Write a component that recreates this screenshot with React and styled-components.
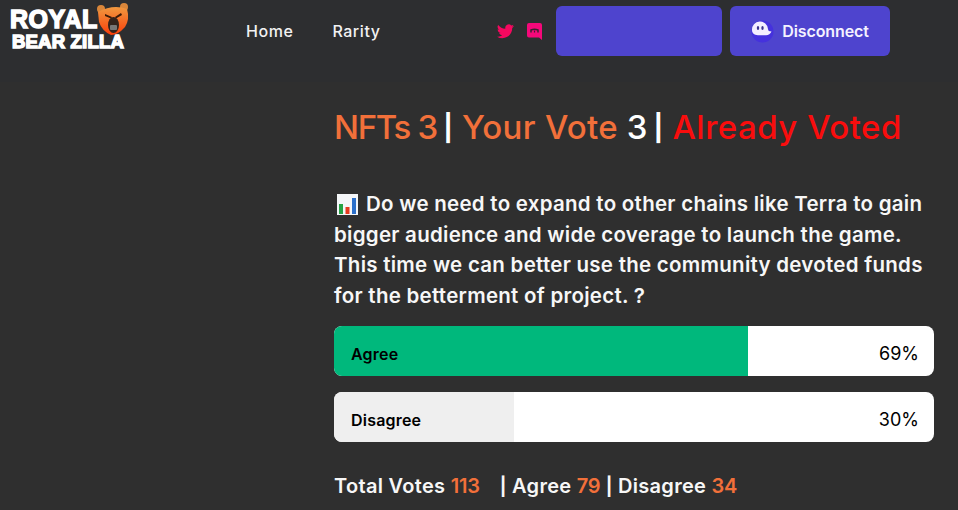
import React from "react";
import styled, { createGlobalStyle } from "styled-components";

const Global = createGlobalStyle`
  html, body { margin: 0; padding: 0; background: #2f2f2f; }
  body { font-family: Inter, "Noto Sans", sans-serif; color: #fff; overflow: hidden; }
`;
const Page = styled.div`width: 958px; height: 510px; overflow: hidden; background: #2f2f2f;`;
const Header = styled.header`
  height: 82px; background: #2d2e30; display: flex; align-items: flex-start; box-sizing: border-box;
  padding: 6px 0 0 10px;
`;
const Logo = styled.div`position: relative; width: 125px; height: 50px; flex: none; margin-top: -4px;`;
const LogoLine = styled.div`
  position: absolute; left: ${p => p.$x}px; top: ${p => p.$y}px; white-space: nowrap;
  font: 900 ${p => p.$size}px/${p => p.$lh}px "Liberation Sans", sans-serif; color: #fff;
  -webkit-text-stroke: 1.5px #fff; letter-spacing: ${p => p.$sp}px;
`;
const BearMark = styled.svg`position: absolute; left: 86px; top: 0; width: 35px; height: 36px;`;
const Nav = styled.nav`display: flex; gap: 39px; margin-left: 111px; height: 50px; align-items: center; width: 251px; flex: none;`;
const NavLink = styled.a`font-size: 16px; font-weight: 500; color: #f2f2f2; letter-spacing: .55px;`;
const Social = styled.div`display: flex; gap: 13px; align-items: center; height: 50px; width: 59px; flex: none;`;
const Btn = styled.div`
  height: 50px; width: ${p => p.$w}px; margin-right: ${p => p.$mr || 0}px; flex: none; background: #4e44ce; border-radius: 6px;
  display: flex; align-items: center; justify-content: center; gap: 8px; box-sizing: border-box;
  font-size: 16px; font-weight: 600; color: #f4f2ff; letter-spacing: -.1px;
`;
const Main = styled.main`margin-left: 334px; width: 600px;`;
const Title = styled.h1`
  margin: 24px 0 0; height: 42px; font-size: 33px; line-height: 42px; font-weight: 550; color: #fff; white-space: nowrap;
`;
const Run = styled.span`color: ${p => p.$c}; letter-spacing: ${p => p.$sp}px;`;
const Pipe = styled.span`font-size: 26px; font-weight: 700; position: relative; top: -2px; margin: ${p => p.$m};`;
const Question = styled.p`
  margin: 41px 0 0; font-size: 20.5px; line-height: 30.5px; font-weight: 580; color: #f7f7f7; white-space: nowrap; letter-spacing: .27px;
`;
const Chart = styled.svg`width: 21px; height: 21px; vertical-align: -4px; margin: 0 8px 0 3px;`;
const Bar = styled.div`
  position: relative; height: 50px; background: #fff; border-radius: 8px; overflow: hidden; margin-top: ${p => p.$mt}px;
  display: flex; align-items: center; justify-content: space-between; padding: 0 15px 0 17px; color: #000;
`;
const Fill = styled.div`position: absolute; left: 0; top: 0; bottom: 0; background: ${p => p.$c};`;
const BarLabel = styled.span`position: relative; font-size: 16px; font-weight: 600; margin-top: 6px; letter-spacing: .2px;`;
const Pct = styled.span`position: relative; font-size: 18px; font-weight: 400; margin-top: 5px;`;
const Totals = styled.div`margin-top: 30px; font-size: 20px; line-height: 28px; font-weight: 580; color: #f7f7f7; white-space: pre; letter-spacing: .3px;`;
const Gap = styled.span`display: inline-block; width: ${p => p.$w}px;`;
const SmallPipe = styled.span`font-size: 18px; font-weight: 700;`;

const O = "#f2703a";
export default function App() {
  return (
    <Page>
      <Global />
      <Header>
        <Logo>
          <LogoLine $x={0} $y={5} $size={25} $lh={24} $sp={0.5}>ROYAL</LogoLine>
          <LogoLine $x={2} $y={31} $size={18.5} $lh={18} $sp={0.2}>BEAR ZILLA</LogoLine>
          <BearMark viewBox="0 0 35 36">
            <defs>
              <linearGradient id="bear" x1="0" y1="0" x2="0" y2="1">
                <stop offset="0" stopColor="#f0983f" />
                <stop offset="1" stopColor="#fb3f0a" />
              </linearGradient>
            </defs>
            <circle cx="5" cy="7" r="4" fill="#d9863a" />
            <circle cx="28" cy="5" r="4" fill="#d9863a" />
            <path d="M2 10 Q17 2 31 7 Q34 17 29 25 Q22 33 15 33 Q6 29 3 20Z" fill="url(#bear)" />
            <path d="M9 12 l7 3 -1 1.500 -6-2.500Z M25 11 l-6 4 1 1.500 6-3.500Z" fill="#3a1a08" />
            <ellipse cx="17.500" cy="23" rx="5.500" ry="8" fill="#33231c" />
            <rect x="14" y="23" width="7" height="5" rx="1" fill="#777" />
          </BearMark>
        </Logo>
        <Nav>
          <NavLink>Home</NavLink>
          <NavLink>Rarity</NavLink>
        </Nav>
        <Social>
          <svg width="17" height="15" viewBox="0 0 24 20" fill="#f5085f">
            <path d="M24 2.4a9.8 9.8 0 0 1-2.8.8A4.9 4.9 0 0 0 23.3.5a9.8 9.8 0 0 1-3.1 1.2 4.9 4.9 0 0 0-8.4 4.5A14 14 0 0 1 1.7.9a4.9 4.9 0 0 0 1.5 6.6 4.9 4.9 0 0 1-2.2-.6v.1a4.9 4.9 0 0 0 3.9 4.8 4.9 4.9 0 0 1-2.2.1 4.9 4.9 0 0 0 4.6 3.4A9.9 9.9 0 0 1 0 17.3 13.9 13.9 0 0 0 7.5 19.5c9.1 0 14-7.5 14-14v-.6A10 10 0 0 0 24 2.4Z" />
          </svg>
          <svg width="15" height="17" viewBox="0 0 15 17">
            <path d="M2 0h11a2 2 0 0 1 2 2v15l-3-2.500H2a2 2 0 0 1-2-2V2a2 2 0 0 1 2-2Z" fill="#f5087a" />
            <path d="M4 9.500V7q3.500-1.600 7 0v2.500" fill="none" stroke="#3a2030" strokeWidth="1.500" />
            <path d="M7.500 7.500v2" stroke="#3a2030" strokeWidth="1.200" />
          </svg>
        </Social>
        <Btn $w={166} $mr={8} />
        <Btn $w={160}>
          <svg width="23" height="24" viewBox="0 0 23 24">
            <circle cx="11.500" cy="12.500" r="11" fill="#4531dd" />
            <path d="M1 11a8 8 0 0 1 16-1c.2 1.800 1.200 2.500 3.500 2.500-1 2.300-3 3.800-5.500 3.800H8.500C4.500 16.300 1 15 1 11Z" fill="#f3eeff" />
            <ellipse cx="7" cy="9" rx="1.200" ry="1.900" fill="#39318f" />
            <ellipse cx="11.500" cy="9" rx="1.200" ry="1.900" fill="#39318f" />
          </svg>
          Disconnect
        </Btn>
      </Header>
      <Main>
        <Title>
          <Run $c={O} $sp={-1.3}>NFTs 3</Run><Pipe $m="0 3px 0 0"> | </Pipe><Run $c={O} $sp={.3}>Your Vote</Run> 3<Pipe $m="0 3px 0 0"> | </Pipe><Run $c="#f90d0d" $sp={.5}>Already Voted</Run>
        </Title>
        <Question>
          <Chart viewBox="0 0 21 21">
            <rect width="21" height="21" fill="#f4f6f8" />
            <rect x="2" y="10" width="4" height="10" fill="#25a244" />
            <rect x="8.500" y="13" width="4" height="7" fill="#e5391f" />
            <rect x="15" y="4" width="4" height="16" fill="#2b6fc9" />
          </Chart>
          Do we need to expand to other chains like Terra to gain<br />
          bigger audience and wide coverage to launch the game.<br />
          This time we can better use the community devoted funds<br />
          for the betterment of project. ?
        </Question>
        <Bar $mt={15}>
          <Fill $c="#00b87c" style={{ width: "69%" }} />
          <BarLabel>Agree</BarLabel>
          <Pct>69%</Pct>
        </Bar>
        <Bar $mt={16}>
          <Fill $c="#efefef" style={{ width: "30%" }} />
          <BarLabel>Disagree</BarLabel>
          <Pct>30%</Pct>
        </Bar>
        <Totals>Total Votes <Run $c={O} $sp={-.2}>113</Run><Gap $w={20} /><SmallPipe>|</SmallPipe> Agree <Run $c={O} $sp={-.3}>79</Run> <SmallPipe>|</SmallPipe> Disagree <Run $c={O} $sp={-.3}>34</Run></Totals>
      </Main>
    </Page>
  );
}
